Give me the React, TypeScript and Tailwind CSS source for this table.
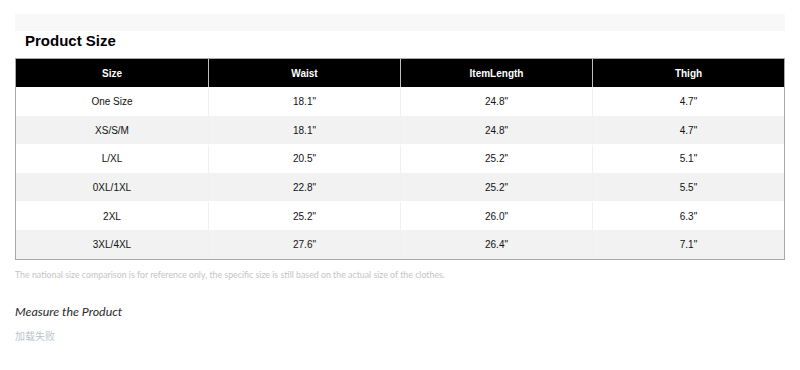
const headers = ["Size", "Waist", "ItemLength", "Thigh"]

const rows = [
  ["One Size", "18.1\"", "24.8\"", "4.7\""],
  ["XS/S/M", "18.1\"", "24.8\"", "4.7\""],
  ["L/XL", "20.5\"", "25.2\"", "5.1\""],
  ["0XL/1XL", "22.8\"", "25.2\"", "5.5\""],
  ["2XL", "25.2\"", "26.0\"", "6.3\""],
  ["3XL/4XL", "27.6\"", "26.4\"", "7.1\""],
]

export default function App() {
  return (
    <div className="w-[800px] h-[370px] bg-white px-[15px] pt-[14px] font-['Liberation_Sans',Arial,sans-serif]">
      {/* top strip */}
      <div className="h-[17px] bg-[#f8f8f8]" />

      <h2 className="pl-[10px] pt-[1px] text-[15px] leading-[18px] font-bold text-black">Product Size</h2>

      {/* size table */}
      <div className="mt-[8px] border border-[#a8a8a8]">
        <div className="grid grid-cols-4 h-[28px] bg-black text-white text-[10px] font-bold">
          {headers.map((h, i) => (
            <div
              key={h}
              className={`flex items-center justify-center ${i > 0 ? "border-l border-[#bdbdbd]" : ""}`}
            >
              {h}
            </div>
          ))}
        </div>
        {rows.map((r, ri) => (
          <div
            key={r[0]}
            className={`grid grid-cols-4 h-[28.6px] pt-[1px] text-[10px] text-[#111] ${ri % 2 === 1 ? "bg-[#f2f2f2]" : "bg-white"}`}
          >
            {r.map((c, ci) => (
              <div
                key={ci}
                className={`flex items-center justify-center ${ci > 0 ? "border-l border-[#f0f0f0]" : ""}`}
              >
                {c}
              </div>
            ))}
          </div>
        ))}
      </div>

      <p className="mt-[9px] text-[8.8px] leading-[12px] text-[#c4c4c4] font-['Lato',sans-serif]">
        The national size comparison is for reference only, the specific size is still based on the actual size of the clothes.
      </p>

      <p className="mt-[24px] text-[12.4px] leading-[14px] italic font-normal text-[#2a2a2a] font-['Lato',sans-serif]">Measure the Product</p>

      <p className="mt-[10px] text-[10px] leading-[14px] text-[#bcc3cc] font-['Noto_Sans_CJK_SC',sans-serif]">加载失败</p>
    </div>
  )
}
